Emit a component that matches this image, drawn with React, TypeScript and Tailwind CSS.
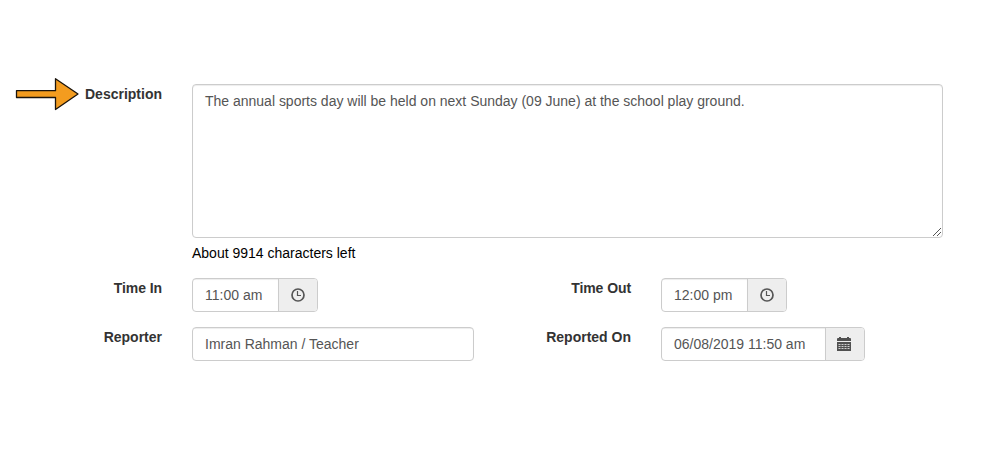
import type { ReactNode } from 'react';

function Label({ children, className = '' }: { children: ReactNode; className?: string }) {
  return <div className={`shrink-0 text-right font-bold text-[#333] ${className}`}>{children}</div>;
}

function Field({ value, addon, className }: { value: string; addon?: ReactNode; className: string }) {
  return (
    <div className={`flex h-[34px] shrink-0 overflow-hidden rounded border border-[#ccc] bg-white ${className}`}>
      <div className="flex-1 whitespace-nowrap pl-3 pt-1.5 text-[#555] shadow-[inset_0_1px_1px_rgba(0,0,0,0.075)]">{value}</div>
      {addon && <div className="flex w-[39px] shrink-0 items-center justify-center border-l border-[#ccc] bg-[#eee]">{addon}</div>}
    </div>
  );
}

function Clock() {
  return (
    <svg width="14" height="14" viewBox="0 0 14 14" fill="none" stroke="#555">
      <circle cx="7" cy="7" r="6" strokeWidth="1.7" />
      <path d="M6.5 3v4.5h3.5" strokeWidth="1.2" />
    </svg>
  );
}

function Calendar() {
  return (
    <svg className="mr-0.5" width="14" height="14" viewBox="0 0 14 14">
      <path fill="#505050" d="M1 1h1V0h2v1h6V0h2v1h1q1 0 1 1v2H0V2q0-1 1-1zM0 5h14v9H0z" />
      <path stroke="#ddd" strokeDasharray="2 1" d="M1.5 7.5h11M1.5 9.5h11M1.5 11.5h11" strokeWidth=".9" />
    </svg>
  );
}

export default function App() {
  return (
    <main className="h-[450px] w-[983px] overflow-hidden bg-white pt-[84px] font-['Liberation_Sans',Arial,sans-serif] text-[14px] leading-5">
      <div className="flex h-[154px]">
        <svg className="ml-[15px] mt-[-7px] shrink-0" width="64" height="34" viewBox="0 0 64 34">
          <path d="M1.5 13.7h39v-12L63 17 40.5 32.5V20.5h-39z" fill="#f39c1f" stroke="#1b140c" strokeWidth="1.3" strokeLinejoin="round" />
        </svg>
        <Label className="w-[83px]">Description</Label>
        <div className="relative ml-[30px] h-[154px] w-[751px] rounded border border-[#ccc] pl-3 pt-1.5 tracking-[-0.006px] text-[#555] shadow-[inset_0_1px_1px_rgba(0,0,0,0.075)]">
          The annual sports day will be held on next Sunday (09 June) at the school play ground.
          <svg className="absolute bottom-0 right-0" width="10" height="10" viewBox="0 0 10 10" stroke="#555" strokeWidth="1">
            <path d="M1 9 9 1M5 9l4-4" />
          </svg>
        </div>
      </div>
      <div className="ml-[192px] mt-[5px] h-5 text-black">About 9914 characters left</div>
      <div className="mt-[15px] flex">
        <Label className="w-[162px] tracking-[-0.08px]">Time In</Label>
        <Field className="ml-[30px] w-[126px]" value="11:00 am" addon={<Clock />} />
        <Label className="w-[313px] tracking-[-0.08px]">Time Out</Label>
        <Field className="ml-[30px] w-[126px]" value="12:00 pm" addon={<Clock />} />
      </div>
      <div className="mt-[15px] flex">
        <Label className="w-[162px]">Reporter</Label>
        <Field className="ml-[30px] w-[282px]" value="Imran Rahman / Teacher" />
        <Label className="w-[157px]">Reported On</Label>
        <Field className="ml-[30px] w-[204px]" value="06/08/2019 11:50 am" addon={<Calendar />} />
      </div>
    </main>
  );
}
